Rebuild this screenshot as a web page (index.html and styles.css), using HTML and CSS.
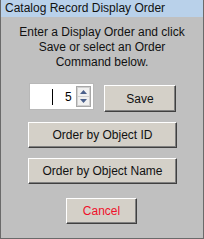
FILE: index.html
```html
<!DOCTYPE html>
<html>
<head>
<meta charset="utf-8">
<link rel="stylesheet" href="styles.css">
</head>
<body>
<div class="window">
  <div class="titlebar">Catalog Record Display Order</div>
  <div class="content">
    <p class="intro">Enter a Display Order and click<br>Save or select an Order<br>Command below.</p>
    <div class="row">
      <div class="spin">
        <span class="caret"></span>
        <span class="value">5</span>
        <div class="spinbtns">
          <div class="sbtn">
            <svg width="7" height="4" viewBox="0 0 7 4"><path d="M0 4 L3.5 0 L7 4 Z" fill="#4a5f8a"/></svg>
          </div>
          <div class="sbtn">
            <svg width="7" height="4" viewBox="0 0 7 4"><path d="M0 0 L3.5 4 L7 0 Z" fill="#4a5f8a"/></svg>
          </div>
        </div>
      </div>
      <button class="btn save">Save</button>
    </div>
    <button class="btn wide first">Order by Object ID</button>
    <button class="btn wide">Order by Object Name</button>
    <button class="btn cancel">Cancel</button>
  </div>
</div>
</body>
</html>
```

FILE: styles.css
```css
html, body {
  margin: 0;
  padding: 0;
  background: #c0c0c0;
}
.window {
  box-sizing: border-box;
  width: 204px;
  height: 239px;
  border: 1px solid #6a6a6a;
  border-top: none;
  background: #c0c0c0;
  font-family: "Liberation Sans", Arial, sans-serif;
  color: #000;
}
.titlebar {
  height: 17px;
  line-height: 17px;
  background: #b9d1ea;
  font-size: 12px;
  padding-left: 4px;
  color: #111;
}
.content {
  display: flex;
  flex-direction: column;
  align-items: center;
}
.intro {
  margin: 8px 0 0 0;
  font-size: 12px;
  line-height: 15px;
  text-align: center;
  color: #111;
}
.row {
  display: flex;
  align-items: flex-start;
  gap: 10px;
  margin-top: 13px;
  margin-left: 1px;
}
.spin {
  box-sizing: border-box;
  width: 65px;
  height: 27px;
  background: #fff;
  border: 1px solid #b8b8b8;
  display: flex;
  align-items: center;
  position: relative;
}
.caret {
  width: 1px;
  height: 16px;
  background: #000;
  margin-left: 22px;
}
.value {
  font-size: 12px;
  margin-left: 12px;
  width: 8px;
}
.spinbtns {
  margin-left: 3px;
  display: flex;
  flex-direction: column;
  gap: 1px;
  padding: 1px;
  background: #d0d0d0;
  border: 1px solid #a8a8a8;
}
.sbtn {
  width: 11px;
  height: 8px;
  background: #f0f0f0;
  display: flex;
  align-items: center;
  justify-content: center;
}
.btn {
  box-sizing: border-box;
  height: 26px;
  background: #d4d0c8;
  border-style: solid;
  border-width: 1px 1px 1px 1px;
  border-color: #fff #404040 #404040 #fff;
  box-shadow: inset -1px -1px 0 #808080;
  font-family: "Liberation Sans", Arial, sans-serif;
  font-size: 12px;
  color: #111;
  padding: 0;
}
.save {
  width: 72px;
  height: 27px;
  margin-top: 2px;
}
.wide {
  width: 149px;
  margin-top: 10px;
  margin-left: 1px;
}
.cancel {
  width: 71px;
  margin-top: 14px;
  margin-left: -1px;
  color: #f0102a;
}
```
